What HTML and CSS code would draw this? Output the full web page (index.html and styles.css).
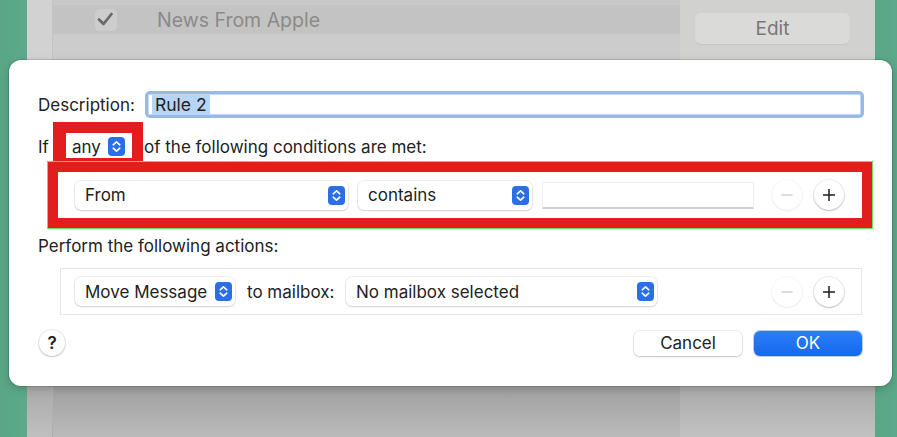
FILE: index.html
```html
<!DOCTYPE html>
<html>
<head>
<meta charset="utf-8">
<link rel="stylesheet" href="styles.css">
</head>
<body>
<div class="desk">
  <div class="green"></div>
  <div class="window">
    <div class="window-top">
      <div class="side"></div>
      <div class="list">
        <div class="list-top"></div>
        <div class="row-sel">
          <span class="check"><svg viewBox="0 0 22 22"><path d="M4 10.5 L8.5 15 L16.5 5"/></svg></span>
          <span class="row-name">News From Apple</span>
        </div>
      </div>
      <div class="panel">
        <div class="edit-btn">Edit</div>
      </div>
    </div>
    <div class="window-bottom">
      <div class="side-b"></div>
      <div class="list-b"></div>
      <div class="panel-b"></div>
    </div>
  </div>
  <div class="green"></div>

  <div class="sheet">
    <div class="desc-row">
      <label class="desc-label">Description:</label>
      <div class="desc-input"><span class="sel-text">Rule 2</span></div>
    </div>

    <div class="if-row">
      <span class="txt if-word">If</span>
      <span class="mark-small">
        <span class="popup popup-any"><span class="popup-label">any</span>
          <svg class="stepper" viewBox="0 0 17 19"><rect x="0" y="0" width="17" height="19" rx="4"/><path d="M5.2 7.8 L8.5 4.8 L11.8 7.8 M5.2 11.2 L8.5 14.2 L11.8 11.2"/></svg>
        </span>
      </span>
      <span class="txt of-words">of the following conditions are met:</span>
    </div>

    <div class="cond-box">
      <div class="popup popup-from"><span class="popup-label">From</span>
        <svg class="stepper" viewBox="0 0 17 19"><rect x="0" y="0" width="17" height="19" rx="4"/><path d="M5.2 7.8 L8.5 4.8 L11.8 7.8 M5.2 11.2 L8.5 14.2 L11.8 11.2"/></svg>
      </div>
      <div class="popup popup-contains"><span class="popup-label">contains</span>
        <svg class="stepper" viewBox="0 0 17 19"><rect x="0" y="0" width="17" height="19" rx="4"/><path d="M5.2 7.8 L8.5 4.8 L11.8 7.8 M5.2 11.2 L8.5 14.2 L11.8 11.2"/></svg>
      </div>
      <div class="text-field"></div>
      <div class="round-btns">
        <span class="round minus"><svg viewBox="0 0 14 14"><path d="M1.5 7 H12.5"/></svg></span>
        <span class="round plus"><svg viewBox="0 0 14 14"><path d="M1 7 H13 M7 1 V13"/></svg></span>
      </div>
    </div>

    <div class="section-title">Perform the following actions:</div>

    <div class="act-box">
      <div class="popup popup-move"><span class="popup-label">Move Message</span>
        <svg class="stepper" viewBox="0 0 17 19"><rect x="0" y="0" width="17" height="19" rx="4"/><path d="M5.2 7.8 L8.5 4.8 L11.8 7.8 M5.2 11.2 L8.5 14.2 L11.8 11.2"/></svg>
      </div>
      <span class="txt to-mailbox">to mailbox:</span>
      <div class="popup popup-mailbox"><span class="popup-label">No mailbox selected</span>
        <svg class="stepper" viewBox="0 0 17 19"><rect x="0" y="0" width="17" height="19" rx="4"/><path d="M5.2 7.8 L8.5 4.8 L11.8 7.8 M5.2 11.2 L8.5 14.2 L11.8 11.2"/></svg>
      </div>
      <div class="round-btns">
        <span class="round minus"><svg viewBox="0 0 14 14"><path d="M1.5 7 H12.5"/></svg></span>
        <span class="round plus"><svg viewBox="0 0 14 14"><path d="M1 7 H13 M7 1 V13"/></svg></span>
      </div>
    </div>

    <div class="bottom-row">
      <span class="help">?</span>
      <div class="btns">
        <span class="btn cancel">Cancel</span>
        <span class="btn ok">OK</span>
      </div>
    </div>
  </div>
</div>
</body>
</html>
```

FILE: styles.css
```css
* { box-sizing: border-box; }
html, body { margin: 0; padding: 0; }
body {
  width: 897px;
  height: 437px;
  overflow: hidden;
  font-family: "Inter", "Liberation Sans", sans-serif;
  color: #222;
}
.desk {
  position: relative;
  display: flex;
  height: 437px;
}
.green {
  width: 27px;
  flex: none;
  background: linear-gradient(90deg, #5aa687, #5ca98b);
}
.green:last-of-type {
  width: 22px;
}
.window {
  width: 848px;
  flex: none;
  display: flex;
  flex-direction: column;
}
.window-top {
  height: 386px;
  display: flex;
  background: #cccccc;
}
.window-bottom {
  height: 51px;
  display: flex;
}
.side {
  width: 26px;
  background: #d2d2d2;
  border-right: 1px solid #c4c4c4;
}
.side-b {
  width: 26px;
  background: linear-gradient(180deg, #a9a9a9, #c0c0c0);
  border-right: 1px solid #b0b0b0;
}
.list {
  width: 627px;
  display: flex;
  flex-direction: column;
  background: #cccccc;
}
.list-b {
  width: 627px;
  background: linear-gradient(180deg, #9f9f9f, #bbbbbb);
}
.list-top {
  height: 5px;
  background: #c9c9c9;
}
.row-sel {
  height: 29px;
  background: #c3c3c3;
  display: flex;
  align-items: center;
}
.check {
  margin-left: 42px;
  width: 22px;
  height: 22px;
  border-radius: 5px;
  background: #cdcdcd;
  display: flex;
  align-items: center;
  justify-content: center;
}
.check svg {
  width: 22px;
  height: 22px;
}
.check path {
  fill: none;
  stroke: #6a6a6a;
  stroke-width: 2.8;
  stroke-linecap: round;
  stroke-linejoin: round;
}
.row-name {
  margin-left: 40px;
  font-size: 19.5px;
  color: #8a8a8a;
}
.panel {
  width: 195px;
  background: #d1d2d0;
  padding: 13px 25px 0 15px;
}
.panel-b {
  width: 195px;
  background: linear-gradient(180deg, #aaaaaa, #c2c2c2);
}
.edit-btn {
  height: 31px;
  border-radius: 6px;
  background: #dadbd9;
  box-shadow: 0 1px 1px rgba(0,0,0,0.06);
  color: #777;
  font-size: 19px;
  display: flex;
  align-items: center;
  justify-content: center;
}

/* sheet dialog overlaying the window */
.sheet {
  position: absolute;
  left: 9px;
  top: 60px;
  width: 883px;
  height: 326px;
  background: #fff;
  border-radius: 12px;
  box-shadow: 0 0 0 1px rgba(0,0,0,0.12), 0 3px 10px rgba(0,0,0,0.18);
  padding: 31px 28px 0 29px;
  display: flex;
  flex-direction: column;
  font-size: 17px;
}
.desc-row {
  display: flex;
  align-items: center;
  height: 27px;
}
.desc-label {
  width: 107px;
  flex: none;
}
.desc-input {
  flex: 1;
  height: 27px;
  border: 3px solid #98b8e6;
  border-radius: 5px;
  box-shadow: inset 0 0 0 1px #c4d7f2;
  display: flex;
  align-items: center;
  padding-left: 4px;
}
.sel-text {
  background: #b7d5f6;
  padding: 0 3px;
  line-height: 20px;
  font-size: 17.5px;
}

.if-row {
  margin-top: 4px;
  display: flex;
  align-items: baseline;
  height: 41px;
}
.if-word {
  width: 15px;
}
.mark-small {
  display: flex;
  border-style: solid;
  border-color: #e21d1d;
  border-width: 11px 11px 5px 13px;
  background: #fff;
}
.popup {
  height: 29px;
  display: flex;
  align-items: center;
  justify-content: space-between;
  background: #fff;
  border-radius: 6px;
  box-shadow: 0 0 0 1px rgba(0,0,0,0.06), 0 1px 2px rgba(0,0,0,0.14);
  padding: 0 3px 0 10px;
  flex: none;
}
.popup-any {
  width: 66px;
  height: 25px;
  box-shadow: none;
  padding: 2px 7px 0 6px;
}
.stepper {
  width: 17px;
  height: 19px;
  flex: none;
}
.stepper rect { fill: #2b6fe6; }
.stepper path {
  fill: none;
  stroke: #fff;
  stroke-width: 1.6;
  stroke-linecap: round;
  stroke-linejoin: round;
}
.of-words {
  margin-left: 1px;
}

.cond-box {
  margin: -1px -8px 0 10px;
  height: 66px;
  border: 10px solid #e21d1d;
  box-shadow: 0 0 0 1px #6be36b;
  display: flex;
  align-items: center;
  padding: 0 18px 0 17px;
  background: #fff;
}
.popup-from { width: 273px; }
.popup-contains { width: 174px; margin-left: 10px; }
.text-field {
  width: 212px;
  height: 27px;
  margin-left: 10px;
  border: 1px solid #eeeeee;
  border-bottom: 2px solid #cfcfcf;
  background: #fff;
}
.round-btns {
  display: flex;
  gap: 12px;
  margin-left: auto;
}
.round {
  width: 30px;
  height: 30px;
  border-radius: 50%;
  background: #fff;
  display: flex;
  align-items: center;
  justify-content: center;
}
.round svg {
  width: 14px;
  height: 14px;
}
.round path {
  fill: none;
  stroke-width: 1.5;
}
.minus {
  box-shadow: 0 0 0 1px rgba(0,0,0,0.03), 0 1px 2px rgba(0,0,0,0.06);
}
.minus path { stroke: #cfcfcf; }
.plus {
  box-shadow: 0 0 0 1px rgba(0,0,0,0.07), 0 1px 2px rgba(0,0,0,0.2);
}
.plus path { stroke: #1e1e1e; }

.section-title {
  margin-top: 7px;
  line-height: 22px;
}
.act-box {
  margin: 11px 2px 0 22px;
  height: 47px;
  border: 1px solid #e6e6e6;
  display: flex;
  align-items: center;
  padding: 0 17px 0 14px;
}
.popup-move { width: 160px; }
.to-mailbox { margin-left: 12px; width: 99px; }
.popup-mailbox { width: 311px; }

.bottom-row {
  margin: 15px 2px 0 0;
  display: flex;
  align-items: center;
  justify-content: space-between;
  height: 26px;
}
.help {
  width: 26px;
  height: 26px;
  margin-left: 1px;
  border-radius: 50%;
  background: #fff;
  box-shadow: 0 0 0 1px rgba(0,0,0,0.07), 0 1px 2px rgba(0,0,0,0.2);
  display: flex;
  align-items: center;
  justify-content: center;
  font-weight: 600;
  font-size: 17px;
}
.btns {
  display: flex;
  gap: 12px;
}
.btn {
  width: 108px;
  height: 25px;
  border-radius: 6px;
  display: flex;
  align-items: center;
  justify-content: center;
}
.cancel {
  background: #fff;
  box-shadow: 0 0 0 1px rgba(0,0,0,0.06), 0 1px 2px rgba(0,0,0,0.18);
}
.ok {
  background: linear-gradient(180deg, #2b7ef7, #1668ee);
  color: #fff;
  box-shadow: 0 0 0 1px rgba(20,80,200,0.3);
}
```
